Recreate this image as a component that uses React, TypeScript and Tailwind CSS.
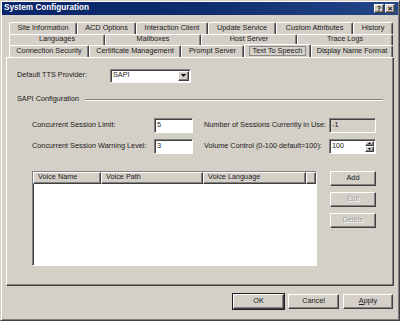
import React from 'react';

const font = "font-['Liberation_Sans',Arial,sans-serif]";

type Tab = { label: string; w: number; active?: boolean };

const rows: Tab[][] = [
  [
    { label: 'Site Information', w: 68 },
    { label: 'ACD Options', w: 59 },
    { label: 'Interaction Client', w: 72 },
    { label: 'Update Service', w: 68 },
    { label: 'Custom Attributes', w: 77 },
    { label: 'History', w: 40 },
  ],
  [
    { label: 'Languages', w: 96 },
    { label: 'Mailboxes', w: 96 },
    { label: 'Host Server', w: 96 },
    { label: 'Trace Logs', w: 96 },
  ],
  [
    { label: 'Connection Security', w: 80 },
    { label: 'Certificate Management', w: 92 },
    { label: 'Prompt Server', w: 63 },
    { label: 'Text To Speech', w: 67, active: true },
    { label: 'Display Name Format', w: 82 },
  ],
];

const raised =
  'border border-t-white border-l-white border-r-[#404040] border-b-[#404040] shadow-[inset_-1px_-1px_0_#808080]';
const sunken =
  'border border-t-[#808080] border-l-[#808080] border-r-white border-b-white shadow-[inset_1px_1px_0_#404040]';

const Button = ({ label, disabled, def }: { label: React.ReactNode; disabled?: boolean; def?: boolean }) => (
  <div
    className={`h-[15px] flex items-center justify-center bg-[#d4d0c8] ${raised} ${
      def ? 'outline outline-1 outline-[#202020]' : ''
    } ${disabled ? 'text-[#a0a0a0] [text-shadow:1px_1px_0_#fff]' : 'text-[#1a1a1a]'}`}
  >
    {label}
  </div>
);

const TabRow = ({ tabs }: { tabs: Tab[] }) => (
  <div className="flex h-[11.5px] ml-[8px]">
    {tabs.map((t) => (
      <div
        key={t.label}
        style={{ width: t.w }}
        className={`flex items-center justify-center border-t border-l border-r border-t-white border-l-white border-r-[#404040] rounded-t-[2px] whitespace-nowrap shadow-[inset_-1px_0_0_#808080] ${
          t.active ? 'relative -mt-[1px] h-[13px] z-10 bg-[#d4d0c8]' : ''
        }`}
      >
        <span className={t.active ? 'border border-[#8a8a8a] px-[3px] leading-[8px]' : ''}>{t.label}</span>
      </div>
    ))}
  </div>
);

export default function App() {
  return (
    <div
      className={`${font} w-[400px] h-[321px] bg-[#d4d0c8] text-[7.3px] text-[#1a1a1a] border border-t-[#d4d0c8] border-l-[#d4d0c8] border-r-[#404040] border-b-[#404040] shadow-[inset_1px_1px_0_#fff,inset_-1px_-1px_0_#808080] overflow-hidden flex flex-col`}
    >
      {/* title bar */}
      <div className="mx-[1px] mt-[1px] h-[13px] flex items-center justify-between bg-gradient-to-r from-[#0a246a] via-[#0f2c70] to-[#24478a] pl-[2px] pr-[3px]">
        <span className="text-white font-bold text-[8.2px]">System Configuration</span>
        <div className="flex gap-[1px]">
          <div className={`w-[10px] h-[9px] bg-[#d4d0c8] ${raised} flex items-center justify-center font-bold text-[7px] leading-none text-black`}>
            ?
          </div>
          <div className={`w-[10px] h-[9px] bg-[#d4d0c8] ${raised} flex items-center justify-center font-bold text-[8px] leading-none text-black`}>
            ×
          </div>
        </div>
      </div>

      {/* tabs */}
      <div className="mt-[7px] flex flex-col">
        <TabRow tabs={rows[0]} />
        <TabRow tabs={rows[1]} />
        <TabRow tabs={rows[2]} />
      </div>

      {/* panel */}
      <div className="mx-[5px] h-[229px] border border-t-white border-l-white border-r-[#404040] border-b-[#404040] shadow-[inset_-1px_-1px_0_#808080] px-[10px] pt-[11px]">
        <div className="flex items-center h-[14px]">
          <span className="w-[93px]">Default TTS Provider:</span>
          <div className={`w-[81px] h-[14px] bg-white ${sunken} flex items-center`}>
            <span className="flex-1 pl-[2px]">SAPI</span>
            <div className={`w-[11px] h-[10px] mr-[1px] bg-[#d4d0c8] ${raised} flex items-center justify-center`}>
              <svg width="5" height="3" viewBox="0 0 5 3">
                <path d="M0 0h5L2.5 3z" fill="#000" />
              </svg>
            </div>
          </div>
        </div>

        <div className="flex items-center mt-[12px] h-[10px]">
          <span>SAPI Configuration</span>
          <div className="flex-1 ml-[6px] h-[2px] border-t border-t-[#808080] border-b border-b-white" />
        </div>

        <div className="ml-[15px] mt-[13px] flex">
          <div className="flex flex-col gap-[6px]">
            <div className="flex items-center h-[15px]">
              <span className="w-[122px]">Concurrent Session Limit:</span>
              <div className={`w-[39px] h-[15px] bg-white ${sunken} pl-[2px] pt-[1px]`}>5</div>
            </div>
            <div className="flex items-center h-[15px]">
              <span className="w-[122px]">Concurrent Session Warning Level:</span>
              <div className={`w-[39px] h-[15px] bg-white ${sunken} pl-[2px] pt-[1px]`}>3</div>
            </div>
          </div>
          <div className="flex flex-col gap-[6px] ml-[11px]">
            <div className="flex items-center h-[15px]">
              <span className="w-[125px]">Number of Sessions Currently in Use:</span>
              <div className={`w-[47px] h-[15px] bg-[#d4d0c8] ${sunken} pl-[2px] pt-[1px]`}>-1</div>
            </div>
            <div className="flex items-center h-[15px]">
              <span className="w-[125px]">Volume Control (0-100 default=100):</span>
              <div className={`w-[47px] h-[15px] bg-white ${sunken} pl-[2px] flex items-center`}>
                <span className="flex-1">100</span>
                <div className="flex flex-col w-[9px] h-[11px] mr-[1px]">
                  <div className={`flex-1 bg-[#d4d0c8] ${raised} flex items-center justify-center`}>
                    <svg width="3" height="2" viewBox="0 0 3 2">
                      <path d="M0 2h3L1.5 0z" fill="#000" />
                    </svg>
                  </div>
                  <div className={`flex-1 bg-[#d4d0c8] ${raised} flex items-center justify-center`}>
                    <svg width="3" height="2" viewBox="0 0 3 2">
                      <path d="M0 0h3L1.5 2z" fill="#000" />
                    </svg>
                  </div>
                </div>
              </div>
            </div>
          </div>
        </div>

        <div className="ml-[15px] mt-[17px] flex">
          <div className={`w-[285px] h-[95px] bg-white ${sunken}`}>
            <div className="flex h-[12px] bg-[#d4d0c8]">
              {[
                ['Voice Name', 68],
                ['Voice Path', 102],
                ['Voice Language', 103],
              ].map(([l, w]) => (
                <div
                  key={l as string}
                  style={{ width: w as number }}
                  className={`${raised} pl-[4px] flex items-center whitespace-nowrap`}
                >
                  {l}
                </div>
              ))}
              <div className={`flex-1 ${raised}`} />
            </div>
          </div>
          <div className="ml-[13px] w-[46px] flex flex-col gap-[6px]">
            <Button label="Add" />
            <Button label="Edit" disabled />
            <Button label="Delete" disabled />
          </div>
        </div>
      </div>

      {/* bottom buttons */}
      <div className="flex justify-end gap-[4px] mt-[8px] pr-[6px]">
        <div className="w-[51px]">
          <Button label="OK" def />
        </div>
        <div className="w-[51px]">
          <Button label="Cancel" />
        </div>
        <div className="w-[50px]">
          <Button
            label={
              <span>
                <span className="underline">A</span>pply
              </span>
            }
          />
        </div>
      </div>
    </div>
  );
}
